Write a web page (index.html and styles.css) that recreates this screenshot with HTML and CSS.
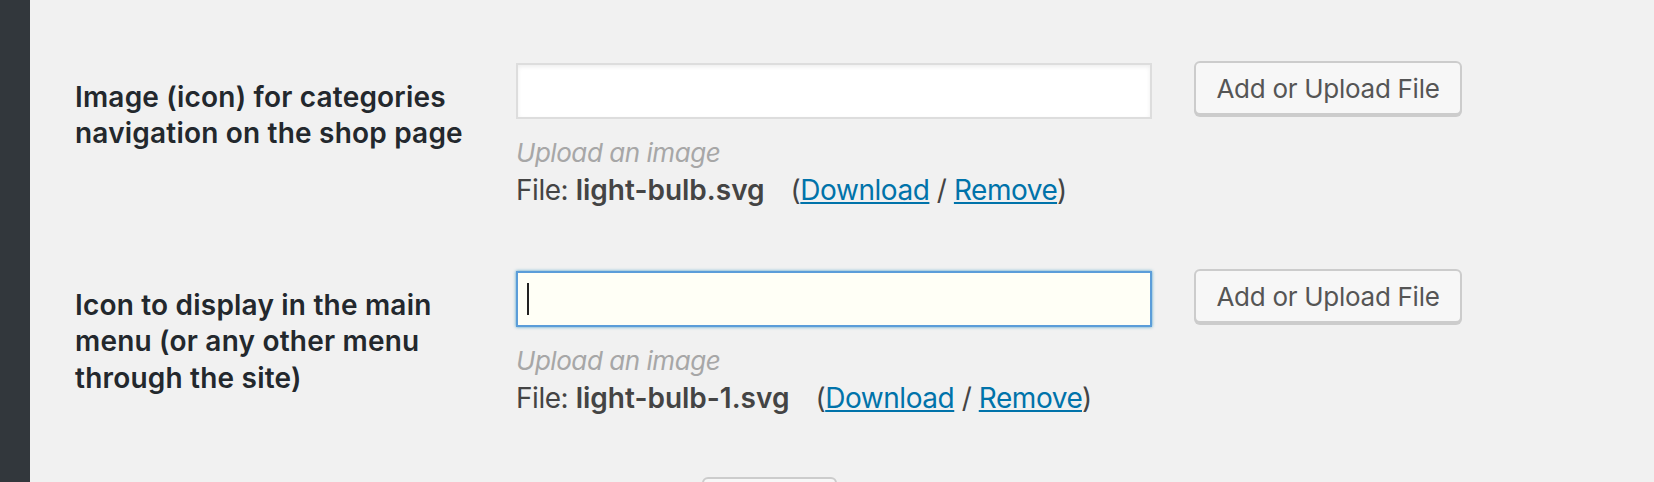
FILE: index.html
```html
<!DOCTYPE html>
<html>
<head>
<meta charset="utf-8">
<link rel="stylesheet" href="styles.css">
</head>
<body>
<div class="page">
  <div class="sidebar"></div>
  <div class="main">
    <div class="row">
      <div class="label">Image (icon) for categories navigation on the shop page</div>
      <div class="field">
        <div class="controls">
          <div class="input"></div>
          <button class="btn">Add or Upload File</button>
        </div>
        <p class="desc">Upload an image</p>
        <p class="file">File: <b>light-bulb.svg</b><span class="paren">(<a href="#">Download</a> / <a href="#">Remove</a>)</span></p>
      </div>
    </div>
    <div class="row">
      <div class="label">Icon to display in the main menu (or any other menu through the site)</div>
      <div class="field">
        <div class="controls">
          <div class="input focus"><span class="caret"></span></div>
          <button class="btn">Add or Upload File</button>
        </div>
        <p class="desc">Upload an image</p>
        <p class="file">File: <b>light-bulb-1.svg</b><span class="paren">(<a href="#">Download</a> / <a href="#">Remove</a>)</span></p>
      </div>
    </div>
    <div class="submit-row">
      <button class="btn submit" aria-label="Save Changes"></button>
    </div>
  </div>
</div>
</body>
</html>
```

FILE: styles.css
```css
* { box-sizing: border-box; }
html, body { margin: 0; padding: 0; }
body {
  background: #f1f1f1;
  font-family: Inter, "Liberation Sans", sans-serif;
  overflow: hidden;
  height: 482px;
}
.page {
  display: flex;
  height: 482px;
  overflow: hidden;
}
.sidebar {
  width: 30px;
  flex-shrink: 0;
  background: #32373c;
}
.main {
  flex: 1;
  padding: 61px 0 0 45px;
}
.row {
  display: grid;
  grid-template-columns: 441px auto;
  margin-bottom: 60px;
}
.label {
  padding-top: 18px;
  width: 400px;
  font-size: 28px;
  line-height: 36.4px;
  font-weight: 600;
  letter-spacing: 0.2px;
  color: #23282d;
}
.controls {
  display: flex;
  align-items: flex-start;
  gap: 42px;
}
.input {
  margin-top: 2px;
  width: 636px;
  height: 56px;
  border: 2px solid #dddddd;
  background: #ffffff;
  box-shadow: inset 0 2px 4px rgba(0,0,0,0.07);
  display: flex;
  align-items: center;
  padding-left: 9px;
}
.input.focus {
  border-color: #5b9dd9;
  background: #fffff6;
  box-shadow: 0 0 3px rgba(30,140,190,0.8);
}
.caret {
  display: block;
  width: 2px;
  height: 32px;
  background: #222;
}
.btn {
  height: 54px;
  width: 268px;
  border: 2px solid #cccccc;
  border-radius: 6px;
  background: #f7f7f7;
  box-shadow: 0 2px 0 #cccccc;
  color: #555555;
  font-family: Inter, "Liberation Sans", sans-serif;
  font-size: 26px;
  letter-spacing: -0.28px;
  padding: 0;
}
.desc {
  margin: 15px 0 0 0;
  font-size: 26px;
  line-height: 37px;
  font-style: italic;
  letter-spacing: -0.45px;
  color: #a7a7a7;
}
.file {
  margin: 0;
  font-size: 28px;
  line-height: 38px;
  color: #444444;
  letter-spacing: -0.45px;
}
.file b {
  font-weight: 600;
  letter-spacing: 0;
}
.paren {
  margin-left: 26px;
}
.file a {
  color: #0073aa;
  text-decoration: underline;
}
.submit-row {
  padding-left: 627px;
}
.btn.submit {
  width: 135px;
  height: 60px;
}
```
